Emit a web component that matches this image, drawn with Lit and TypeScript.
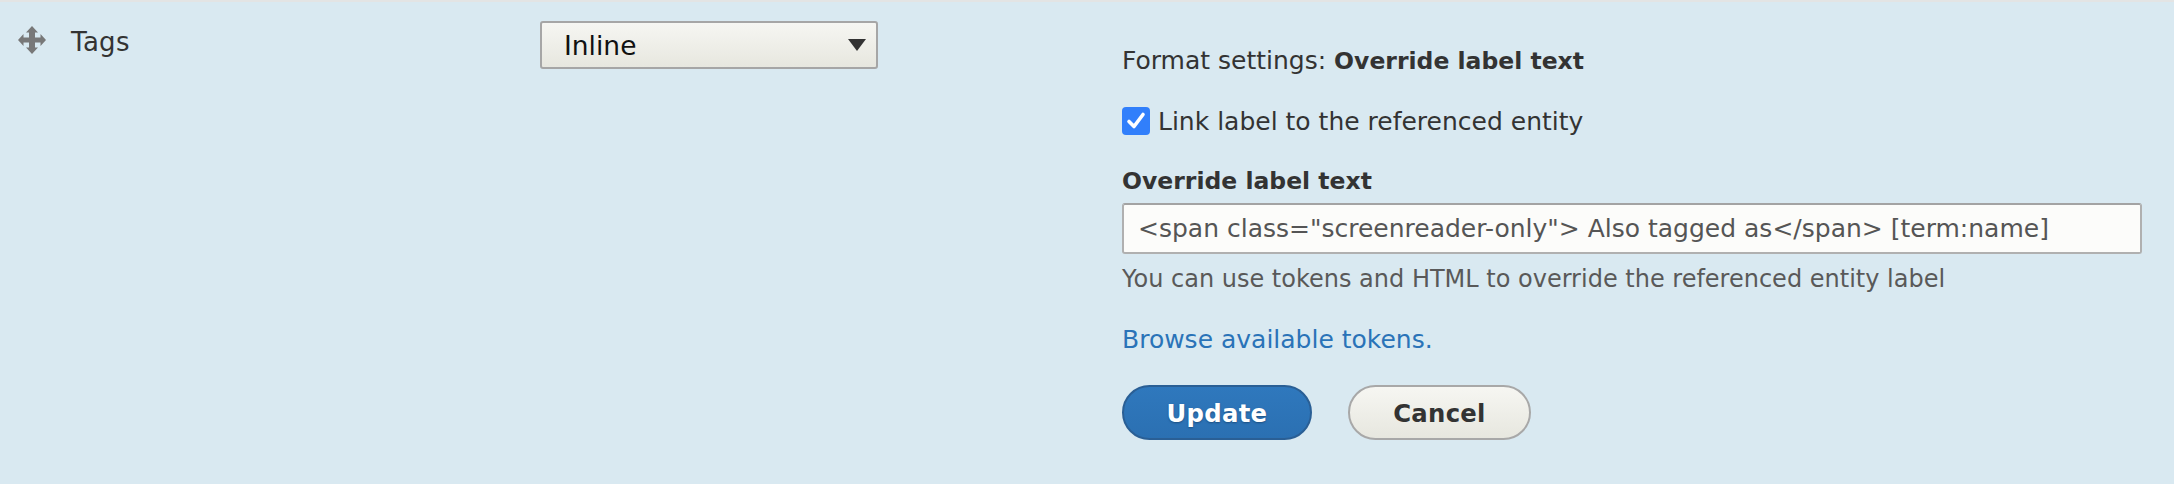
import { LitElement, html, css } from "lit";
import { customElement } from "lit/decorators.js";

@customElement("app-root")
export class AppRoot extends LitElement {
  static styles = css`
    :host { display: block; width: 2174px; height: 484px; }
    * { box-sizing: border-box; }
    .row {
      display: flex; width: 2174px; height: 484px; overflow: hidden;
      background: #d9e9f1; border-top: 2px solid #e3e4e4;
      font-family: "DejaVu Sans", Verdana, sans-serif; font-size: 25px; color: #333;
    }
    .name { width: 540px; flex: none; display: flex; align-items: flex-start; padding: 24px 0 0 18px; }
    .grip { width: 28px; height: 28px; flex: none; display: block; }
    .tags { margin-left: 25px; line-height: 30px; font-size: 26px; letter-spacing: 0.3px; padding-top: 1px; }
    .type { width: 582px; flex: none; padding-top: 19px; }
    .selectwrap { position: relative; width: 338px; height: 48px; }
    select {
      appearance: none; display: block; width: 100%; height: 100%; margin: 0;
      border: 2px solid #a6a6a6; border-radius: 3px; padding: 0 0 0 22px;
      background: linear-gradient(#f6f6f2, #e7e7df);
      font: inherit; font-size: 26.5px; color: #111;
    }
    .arrow {
      position: absolute; right: 12px; top: 18px; width: 0; height: 0;
      border-left: 9px solid transparent; border-right: 9px solid transparent;
      border-top: 12px solid #333;
    }
    .form { flex: none; width: 1020px; padding-top: 41px; }
    .title { line-height: 36px; margin: 0; }
    b { font-weight: 700; font-size: 23.5px; }
    .check { display: flex; align-items: center; margin-top: 28px; height: 28px; }
    .box { width: 28px; height: 28px; flex: none; display: block; margin-right: 8px; }
    .field-label { font-weight: 700; font-size: 23.5px; margin: 28px 0 0; line-height: 36px; }
    input {
      display: block; width: 1020px; height: 51px; margin: 4px 0 0;
      border: 2px solid #b0b0b0; border-top-color: #a3a3a3; border-radius: 3px;
      background: #fcfcfa; padding: 0 14px;
      font: inherit; color: #555; outline: none;
    }
    .desc { color: #595959; margin: 7px 0 0; line-height: 36px; font-size: 24px; }
    .browse { display: block; color: #2a73b8; text-decoration: none; margin: 25px 0 0; line-height: 36px; }
    .actions { display: flex; gap: 36px; margin-top: 27px; }
    button {
      height: 55px; border-radius: 28px; margin: 0; padding: 2px 0 0;
      font: inherit; font-weight: 700; font-size: 24.3px; letter-spacing: 0.3px; cursor: pointer;
    }
    .update {
      width: 190px; color: #fff; border: 2px solid #2a5f95;
      background: linear-gradient(#2f78bd, #2b70b2);
      text-shadow: 0 1px 2px #1d4f80;
    }
    .cancel {
      width: 183px; color: #333; border: 2px solid #a8a8a8;
      background: linear-gradient(#f6f6f2, #e7e7df);
    }
  `;

  render() {
    return html`
      <div class="row">
        <div class="name">
          <svg class="grip" viewBox="0 0 28 28" aria-hidden="true">
            <path fill="#787878" d="M14 0l6 6.500h-3v5h5.500V8L28 14l-5.500 6v-3.500H17v5h3L14 28l-6-6.500h3v-5H5.500V20L0 14l5.500-6v3.500H11v-5H8z"/>
          </svg>
          <span class="tags">Tags</span>
        </div>
        <div class="type">
          <div class="selectwrap">
            <select><option>Inline</option></select>
            <span class="arrow"></span>
          </div>
        </div>
        <div class="form">
          <div class="title">Format settings: <b>Override label text</b></div>
          <label class="check">
            <svg class="box" viewBox="0 0 28 28" aria-hidden="true">
              <rect width="28" height="28" rx="4" fill="#317ffb"/>
              <path d="M7 14.500l5 5 9-12" fill="none" stroke="#fff" stroke-width="3.600" stroke-linecap="round" stroke-linejoin="round"/>
            </svg>
            <span>Link label to the referenced entity</span>
          </label>
          <div class="field-label">Override label text</div>
          <input type="text" .value=${'<span class="screenreader-only"> Also tagged as</span> [term:name]'} />
          <div class="desc">You can use tokens and HTML to override the referenced entity label</div>
          <a class="browse" href="#">Browse available tokens.</a>
          <div class="actions">
            <button class="update">Update</button>
            <button class="cancel">Cancel</button>
          </div>
        </div>
      </div>
    `;
  }
}
